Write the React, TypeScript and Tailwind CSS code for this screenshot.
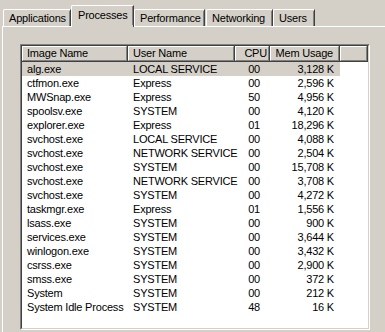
import React from 'react';

type Proc = { name: string; user: string; cpu: string; mem: string };

const procs: Proc[] = [
    { name: 'alg.exe', user: 'LOCAL SERVICE', cpu: '00', mem: '3,128 K' },
    { name: 'ctfmon.exe', user: 'Express', cpu: '00', mem: '2,596 K' },
    { name: 'MWSnap.exe', user: 'Express', cpu: '50', mem: '4,956 K' },
    { name: 'spoolsv.exe', user: 'SYSTEM', cpu: '00', mem: '4,120 K' },
    { name: 'explorer.exe', user: 'Express', cpu: '01', mem: '18,296 K' },
    { name: 'svchost.exe', user: 'LOCAL SERVICE', cpu: '00', mem: '4,088 K' },
    { name: 'svchost.exe', user: 'NETWORK SERVICE', cpu: '00', mem: '2,504 K' },
    { name: 'svchost.exe', user: 'SYSTEM', cpu: '00', mem: '15,708 K' },
    { name: 'svchost.exe', user: 'NETWORK SERVICE', cpu: '00', mem: '3,708 K' },
    { name: 'svchost.exe', user: 'SYSTEM', cpu: '00', mem: '4,272 K' },
    { name: 'taskmgr.exe', user: 'Express', cpu: '01', mem: '1,556 K' },
    { name: 'lsass.exe', user: 'SYSTEM', cpu: '00', mem: '900 K' },
    { name: 'services.exe', user: 'SYSTEM', cpu: '00', mem: '3,644 K' },
    { name: 'winlogon.exe', user: 'SYSTEM', cpu: '00', mem: '3,432 K' },
    { name: 'csrss.exe', user: 'SYSTEM', cpu: '00', mem: '2,900 K' },
    { name: 'smss.exe', user: 'SYSTEM', cpu: '00', mem: '372 K' },
    { name: 'System', user: 'SYSTEM', cpu: '00', mem: '212 K' },
    { name: 'System Idle Process', user: 'SYSTEM', cpu: '48', mem: '16 K' },
];

const Tab = ({ label, width }: { label: string; width: string }) => (
    <div className={`${width} h-[17px] border-t border-l border-white border-r border-r-[#404040] rounded-tl-[2px] flex items-center pl-[5px] pt-[1px]`}>
        <div className="flex-1 h-full flex items-center border-r border-[#808080]">{label}</div>
    </div>
);

const HeadCell = ({ label, width, align }: { label: string; width: string; align?: string }) => (
    <div className={`${width} h-full border-r border-b border-[#404040]`}>
        <div className={`h-full border-t border-l border-white border-r border-b border-r-[#808080] border-b-[#808080] flex items-center ${align ?? 'pl-[4px]'}`}>
            {label}
        </div>
    </div>
);

export default function App() {
    return (
        <div className="w-[385px] h-[332px] bg-[#d4d0c8] overflow-hidden flex flex-col text-[11px] tracking-[-0.2px] text-black font-['Liberation_Sans',Arial,sans-serif]">
            {/* Tabs */}
            <div className="h-[26px] shrink-0 flex items-end pl-[3px]">
                <Tab label="Applications" width="w-[68px]" />
                <div className="relative z-10 -mb-px w-[63px] h-[22px] bg-[#d4d0c8] border-t border-l border-white border-r border-r-[#404040] rounded-tl-[2px] flex items-center pl-[6px] pb-[2px]">
                    <div className="flex-1 h-full flex items-center border-r border-[#808080]">Processes</div>
                </div>
                <Tab label="Performance" width="w-[71px]" />
                <Tab label="Networking" width="w-[67px] ml-px" />
                <Tab label="Users" width="w-[42px]" />
            </div>

            {/* Panel */}
            <div className="flex-1 ml-[2px] border-t border-l border-white pl-[17px] pt-[17px]">
                <div className="w-[350px] h-[286px] border-t border-l border-[#808080] border-r border-b border-r-white border-b-white">
                    <div className="h-full border-t border-l border-[#404040] border-r border-b border-r-[#d4d0c8] border-b-[#d4d0c8] bg-white flex flex-col">
                        <div className="h-[16px] flex shrink-0 bg-[#d4d0c8]">
                            <HeadCell label="Image Name" width="w-[106px]" />
                            <HeadCell label="User Name" width="w-[107px]" />
                            <HeadCell label="CPU" width="w-[35px]" align="justify-end pr-[1px]" />
                            <HeadCell label="Mem Usage" width="w-[70px]" align="justify-end pr-[5px]" />
                            <HeadCell label="" width="flex-1" />
                        </div>
                        <div className="flex flex-col">
                            {procs.map((p, i) => (
                                <div key={i} className="flex h-[14px] leading-[14px]">
                                    <div className={`flex ${i === 0 ? 'bg-[#d4d0c8]' : ''}`}>
                                        <div className="w-[106px] pl-[5px] whitespace-nowrap">{p.name}</div>
                                        <div className="w-[107px] pl-[5px] whitespace-nowrap">{p.user}</div>
                                        <div className="w-[35px] pr-[10px] text-right">{p.cpu}</div>
                                        <div className="w-[70px] pr-[6px] text-right">{p.mem}</div>
                                    </div>
                                </div>
                            ))}
                        </div>
                    </div>
                </div>
            </div>
        </div>
    );
}
